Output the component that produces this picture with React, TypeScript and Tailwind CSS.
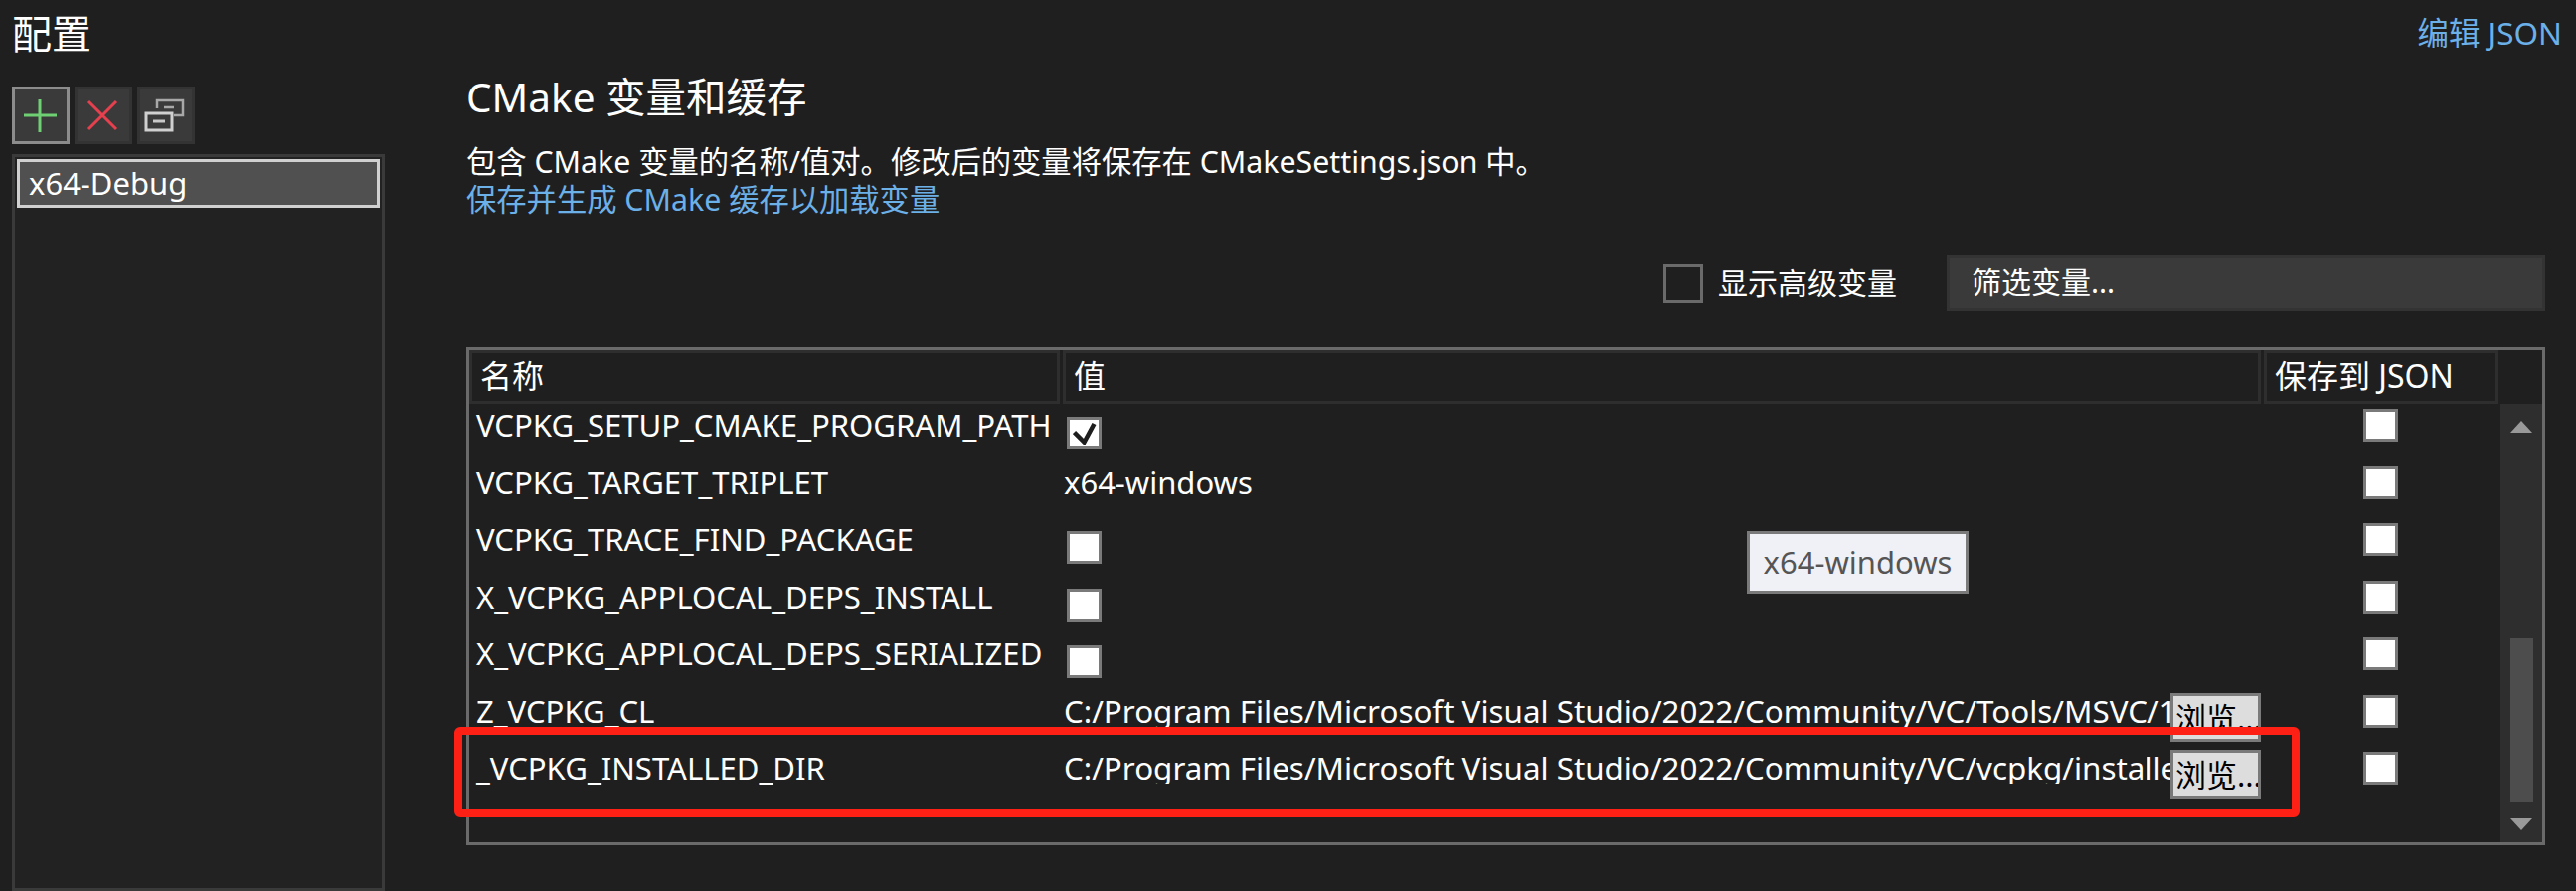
import React from 'react';

const font = { fontFamily: '"Noto Sans", "Noto Sans CJK SC", sans-serif' };

const rows = [
  { name: 'VCPKG_SETUP_CMAKE_PROGRAM_PATH', kind: 'checked', value: '' },
  { name: 'VCPKG_TARGET_TRIPLET', kind: 'text', value: 'x64-windows' },
  { name: 'VCPKG_TRACE_FIND_PACKAGE', kind: 'check', value: '' },
  { name: 'X_VCPKG_APPLOCAL_DEPS_INSTALL', kind: 'check', value: '' },
  { name: 'X_VCPKG_APPLOCAL_DEPS_SERIALIZED', kind: 'check', value: '' },
  { name: 'Z_VCPKG_CL', kind: 'path', value: 'C:/Program Files/Microsoft Visual Studio/2022/Community/VC/Tools/MSVC/14.38.33130/bin/Hostx64/x64/cl.exe' },
  { name: '_VCPKG_INSTALLED_DIR', kind: 'path', value: 'C:/Program Files/Microsoft Visual Studio/2022/Community/VC/vcpkg/installed' },
];

const Check: React.FC<{ checked?: boolean; className?: string }> = ({ checked, className }) => (
  <div className={`flex h-[33px] w-[35px] shrink-0 items-center justify-center border-[3px] border-[#7a7a7a] bg-white ${className ?? ''}`}>
    {checked && (
      <svg width="24" height="24" viewBox="0 0 24 24">
        <path d="M1.5 10.5L11.5 20.5L21.5 2" fill="none" stroke="#1e1e1e" strokeWidth="4.5" />
      </svg>
    )}
  </div>
);

const IconButton: React.FC<{ active?: boolean; children: React.ReactNode }> = ({ active, children }) => (
  <div className={`flex h-[58px] w-[58px] items-center justify-center border-[3px] bg-[#3a3a3a] ${active ? 'border-[#8c8c8c]' : 'border-[#333333]'}`}>
    {children}
  </div>
);

const Row: React.FC<{ row: (typeof rows)[number] }> = ({ row }) => (
  <div className="flex h-[57.5px] shrink-0">
    <div className="w-[594px] shrink-0 pl-[7px] text-[31.1px] leading-[32px] whitespace-nowrap">{row.name}</div>
    <div className="flex w-[1208px] shrink-0 items-start pl-[4px] text-[31px]">
      {row.kind === 'text' && <span className="leading-[32px]">{row.value}</span>}
      {row.kind === 'checked' && <Check checked className="ml-[3px] mt-[8px]" />}
      {row.kind === 'check' && <Check className="ml-[3px] mt-[8px]" />}
      {row.kind === 'path' && (
        <>
          <span className="w-[1113px] shrink-0 overflow-hidden text-[31.35px] leading-[32px] whitespace-nowrap">{row.value}</span>
          <div className="-mt-[2px] h-[49px] w-[91px] shrink-0 overflow-hidden border-[3px] border-[#7a7a7a] bg-[#dddddd] pl-[2px] text-[31px] leading-[44px] whitespace-nowrap text-black">
            浏览...
          </div>
        </>
      )}
    </div>
    <div className="flex flex-1 justify-center pl-[4px]">
      <Check className="mr-[4px]" />
    </div>
  </div>
);

export default function App() {
  return (
    <div className="relative flex h-[896px] w-[2591px] overflow-hidden bg-[#1f1f1f] text-[32px] text-white" style={font}>
      {/* left: configurations */}
      <div className="flex w-[469px] shrink-0 flex-col pl-[12px]">
        <div className="h-[87px] pt-[8px] text-[40px] leading-[52px]">配置</div>
        <div className="flex gap-[5px]">
          <IconButton active>
            <svg className="mr-[3px]" width="36" height="36" viewBox="0 0 36 36">
              <path d="M18 2v33M2 18h33" stroke="#6fcf73" strokeWidth="3" />
            </svg>
          </IconButton>
          <IconButton>
            <svg className="mr-[3px]" width="34" height="34" viewBox="0 0 34 34">
              <path d="M3 3l28 28M31 3L3 31" stroke="#e6404f" strokeWidth="3" />
            </svg>
          </IconButton>
          <IconButton>
            <svg width="44" height="34" viewBox="0 0 44 34">
              <path d="M13 10V2h26v15h-9" fill="none" stroke="#a8a8a8" strokeWidth="2.5" />
              <path d="M20 9h10" stroke="#a8a8a8" strokeWidth="2.5" />
              <rect x="2" y="15" width="26" height="17" fill="#3a3a3a" stroke="#d0d0d0" strokeWidth="3" />
              <path d="M9 23h12" stroke="#c8c8c8" strokeWidth="3" />
            </svg>
          </IconButton>
        </div>
        <div className="mt-[10px] w-[375px] flex-1 border-[3px] border-[#3a3a3a] bg-[#222222] p-[2px]">
          <div className="h-[49px] border-[3px] border-[#d0d0d0] bg-[#505050] pl-[9px] text-[31px] leading-[42px]">x64-Debug</div>
        </div>
      </div>

      {/* right: variables */}
      <div className="flex w-[2091px] shrink-0 flex-col">
        <div className="flex items-start justify-between">
          <div>
            <div className="pt-[72px] text-[40.5px] leading-[52px]">CMake 变量和缓存</div>
            <div className="mt-[18px] text-[30.3px] leading-[42px]">包含 CMake 变量的名称/值对。修改后的变量将保存在 CMakeSettings.json 中。</div>
            <div className="text-[30.3px] leading-[34px] text-[#6cb0e8]">保存并生成 CMake 缓存以加载变量</div>
          </div>
          <div className="mr-[-17px] pt-[12px] text-[31.5px] leading-[42px] text-[#6cb0e8]">编辑 JSON</div>
        </div>
        <div className="mt-[38px] flex items-center justify-end">
          <div className="h-[40px] w-[40px] border-[3px] border-[#6a6a6a]" />
          <div className="ml-[15px] w-[230px] text-[30px] leading-[42px]">显示高级变量</div>
          <div className="h-[57px] w-[602px] border-[3px] border-[#333333] bg-[#3a3a3a] pl-[22px] text-[30px] leading-[50px]">筛选变量...</div>
        </div>
        <div className="mt-[36px] flex h-[501px] flex-col border-[3px] border-[#6a6a6a]">
          <div className="flex h-[54px] shrink-0">
            <div className="mr-[3px] w-[594px] border-[3px] border-[#2e2e2e] pl-[8px] leading-[46px]">名称</div>
            <div className="mr-[3px] w-[1205px] border-[3px] border-[#2e2e2e] pl-[8px] leading-[46px]">值</div>
            <div className="w-[236px] border-[3px] border-[#2e2e2e] pl-[8px] leading-[46px] whitespace-nowrap">保存到 JSON</div>
          </div>
          <div className="flex min-h-0 flex-1">
            <div className="flex min-w-0 flex-1 flex-col pt-[5px]">
              {rows.map(r => (
                <Row key={r.name} row={r} />
              ))}
            </div>
            <div className="flex w-[42px] shrink-0 flex-col items-center justify-between bg-[#2e2e2e] pt-[17px] pb-[12px]">
              <div className="h-0 w-0 border-x-[11px] border-b-[12px] border-x-transparent border-b-[#999999]" />
              <div className="mt-auto mb-[16px] h-[165px] w-[23px] bg-[#4d4d4d]" />
              <div className="h-0 w-0 border-x-[11px] border-t-[12px] border-x-transparent border-t-[#999999]" />
            </div>
          </div>
        </div>
      </div>

      {/* tooltip */}
      <div className="absolute left-[1757px] top-[534px] h-[63px] w-[223px] border-[3px] border-[#7a7a7a] bg-[#f0f1f7] text-center text-[31px] leading-[57px] text-[#555555]">
        x64-windows
      </div>
      {/* red annotation */}
      <div className="absolute left-[457px] top-[731px] h-[91px] w-[1856px] rounded-[6px] border-[8px] border-[#ff2015]" />
    </div>
  );
}
